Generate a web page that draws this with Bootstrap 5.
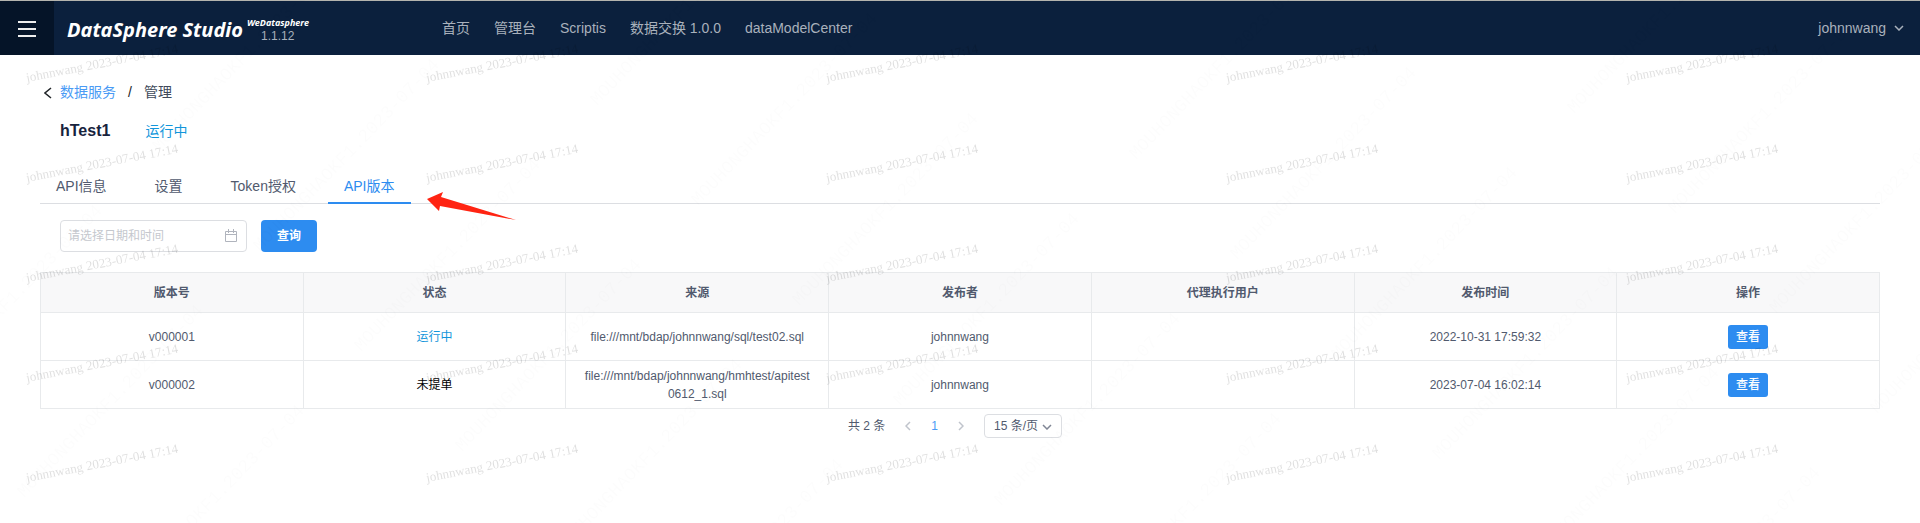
<!DOCTYPE html>
<html lang="zh-CN">
<head>
<meta charset="utf-8">
<meta name="viewport" content="width=device-width, initial-scale=1">
<title>DataSphere Studio</title>
<link href="https://cdn.jsdelivr.net/npm/bootstrap@5.3.0/dist/css/bootstrap.min.css" rel="stylesheet">
<style>
  body { font-family: "Liberation Sans", "Noto Sans CJK SC", sans-serif; font-size: 14px; line-height: 21px; color: #515a6e; min-height: 100vh; }
  a { text-decoration: none; }
  .topbar { height: 55px; background: #0b203d; border-top: 1px solid #b4b4ae; color: #a9b1bc; }
  .menu-btn { width: 54px; background: #051428; border: 0; color: #eee; }
  .brand { width: 388px; padding-left: 13px; gap: 4px; color: #fff; }
  .brand-name { font: italic bold 20px/24px "Noto Sans", sans-serif; padding-top: 4px; }
  .brand-sup { font: italic bold 9px/12px "Noto Sans", sans-serif; padding-top: 4px; }
  .brand-ver { font-size: 12px; line-height: 14px; color: #a9b1bc; padding-left: 14px; }
  .topbar .nav-link { color: inherit; padding: 0; }
  .user-btn { color: inherit; background: none; border: 0; padding: 0 16px; }
  .page { padding: 27px 40px 0; }
  .link-blue { color: #4a9bf5; }
  .crumb-now { color: #40495a; }
  .api-head { padding-left: 20px; column-gap: 35px; }
  .api-name { font-size: 16px; line-height: 24px; font-weight: 700; color: #17233d; }
  .run { color: #1296db; }
  .api-tabs { border-bottom: 1px solid #dcdee2; margin-top: 25px; }
  .api-tabs .nav-link { color: #515a6e; padding: 8px 16px 6px; line-height: 20px; margin: 0 16px -1px 0; border-bottom: 2px solid transparent; }
  .api-tabs .nav-link.active { color: #2d8cf0; border-color: #2d8cf0; }
  .arrow { left: 100%; bottom: -18px; }
  .filters { column-gap: 14px; }
  .date-box { width: 187px; height: 32px; border: 1px solid #dcdee2; border-radius: 4px; padding: 0 8px 0 7px; }
  .date-box input { border: 0; outline: 0; background: none; font-size: 12px; min-width: 0; padding: 0; }
  .date-box input::placeholder { color: #c5c8ce; }
  .btn-blue { background: #2d8cf0; color: #fff; border: 0; font-size: 12px; }
  .btn-query { width: 56px; height: 32px; border-radius: 4px; font-weight: 700; }
  .btn-view { width: 40px; height: 24px; border-radius: 3px; padding: 0; font-weight: 500; }
  .versions { table-layout: fixed; font-size: 12px; line-height: 18px; color: #515a6e; border: 1px solid #dcdee2; margin: 20px 0 0; }
  .versions th, .versions td { text-align: center; vertical-align: middle; border: 1px solid #e8eaec; height: 48px; padding: 0 16px; color: inherit; background: none; overflow-wrap: anywhere; }
  .versions th { height: 40px; background: #f8f8f9; }
  .pager { font-size: 12px; line-height: 24px; padding: 5px 10px 0 0; column-gap: 20px; }
  .pager button { background: none; border: 0; padding: 0; line-height: 0; color: #c0c4cc; }
  .size-box { width: 78px; height: 24px; border: 1px solid #dcdee2; border-radius: 4px; }
  .size-box select { display: block; appearance: none; border: 0; background: none; width: 100%; height: 22px; padding: 0 9px; font-size: 12px; line-height: 20px; color: #515a6e; }
  .size-box svg { right: 9px; top: 9px; pointer-events: none; }
  .watermark { inset: 0; width: 100%; height: 100%; pointer-events: none; z-index: 10; }
  .wm-a { font: 13px "Liberation Serif", serif; fill: #000; fill-opacity: .13; }
  .wm-b { font: 18px "Liberation Mono", monospace; fill: #000; fill-opacity: .012; }
</style>
</head>
<body>
<header class="topbar d-flex align-items-stretch">
  <button class="menu-btn" type="button" aria-label="菜单"><svg width="18" height="18" viewBox="0 0 18 18" stroke="currentColor" stroke-width="2"><path d="M0 2h18M0 9h18M0 16h18"/></svg></button>
  <div class="brand d-flex align-items-center">
    <div class="brand-name">DataSphere Studio</div>
    <div><div class="brand-sup">WeDatasphere</div><div class="brand-ver">1.1.12</div></div>
  </div>
  <nav class="nav align-items-center gap-4 flex-grow-1">
    <a class="nav-link" href="#">首页</a><a class="nav-link" href="#">管理台</a><a class="nav-link" href="#">Scriptis</a><a class="nav-link" href="#">数据交换 1.0.0</a><a class="nav-link" href="#">dataModelCenter</a>
  </nav>
  <button class="user-btn d-flex align-items-center gap-2" type="button">johnnwang <svg width="10" height="6" viewBox="0 0 10 6" fill="none" stroke="currentColor" stroke-width="1.5"><path d="M1 1l4 4 4-4"/></svg></button>
</header>
<main class="page">
  <nav class="d-flex align-items-center" aria-label="路径">
    <a class="d-flex text-dark ps-1 pe-2" href="#" aria-label="返回"><svg width="8" height="12" viewBox="0 0 8 12" fill="none" stroke="currentColor" stroke-width="1.5"><path d="M7 1L1 6l6 5"/></svg></a>
    <a class="link-blue" href="#">数据服务</a><span class="px-2 mx-1 text-dark">/</span><span class="crumb-now">管理</span>
  </nav>
  <div class="api-head d-flex align-items-center mt-3">
    <span class="api-name">hTest1</span><span class="run">运行中</span>
  </div>
  <div class="nav api-tabs">
    <a class="nav-link" href="#">API信息</a><a class="nav-link" href="#">设置</a><a class="nav-link" href="#">Token授权</a>
    <a class="nav-link active position-relative" href="#">API版本<svg class="arrow position-absolute ms-3" width="90" height="28" viewBox="0 0 90 28"><path fill="#ff2412" d="M0 7L16 0L14 5L89 28L13 14L12 19Z"/></svg></a>
  </div>
  <form class="filters d-flex mt-3 ms-3 ps-1">
    <label class="date-box d-flex align-items-center"><input class="flex-grow-1" type="text" aria-label="日期和时间" placeholder="请选择日期和时间"><svg width="14" height="14" viewBox="0 0 14 14" fill="none" stroke="#b0b4bd"><path d="M1.5 2.500h11v10h-11zM1.500 5.500h11M4.500 0v4M9.500 0v4"/></svg></label>
    <button class="btn-blue btn-query" type="button">查询</button>
  </form>
  <table class="table versions">
    <thead><tr><th>版本号</th><th>状态</th><th>来源</th><th>发布者</th><th>代理执行用户</th><th>发布时间</th><th>操作</th></tr></thead>
    <tbody>
      <tr><td>v000001</td><td><span class="run">运行中</span></td><td>file:///mnt/bdap/johnnwang/sql/test02.sql</td><td>johnnwang</td><td></td><td>2022-10-31 17:59:32</td><td><button class="btn-blue btn-view" type="button">查看</button></td></tr>
      <tr><td>v000002</td><td><span class="text-black">未提单</span></td><td>file:///mnt/bdap/johnnwang/hmhtest/apitest0612_1.sql</td><td>johnnwang</td><td></td><td>2023-07-04 16:02:14</td><td><button class="btn-blue btn-view" type="button">查看</button></td></tr>
    </tbody>
  </table>
  <div class="pager d-flex justify-content-center align-items-center">
    <span>共 2 条</span>
    <button type="button" aria-label="上一页"><svg width="6" height="10" viewBox="0 0 6 10" fill="none" stroke="currentColor" stroke-width="1.5"><path d="M5 1L1 5l4 4"/></svg></button>
    <a class="link-blue" href="#">1</a>
    <button type="button" aria-label="下一页"><svg width="6" height="10" viewBox="0 0 6 10" fill="none" stroke="currentColor" stroke-width="1.5"><path d="M1 1l4 4-4 4"/></svg></button>
    <div class="size-box position-relative"><select aria-label="每页条数"><option>15 条/页</option></select><svg class="position-absolute" width="10" height="6" viewBox="0 0 10 6" fill="none" stroke="#808695" stroke-width="1.5"><path d="M1 1l4 4 4-4"/></svg></div>
  </div>
</main>
<svg class="watermark position-fixed" id="watermark" aria-hidden="true"></svg>
<script src="https://cdn.jsdelivr.net/npm/bootstrap@5.3.0/dist/js/bootstrap.bundle.min.js"></script>
<script>
  // Two repeating stamps: the account's name and time, and a fainter diagonal one.
  const layer = document.getElementById('watermark');
  const stamp = (cls, text, x, y, angle) => {
    const t = document.createElementNS('http://www.w3.org/2000/svg', 'text');
    t.setAttribute('class', cls);
    t.setAttribute('transform', `translate(${x} ${y}) rotate(${angle})`);
    t.textContent = text;
    layer.append(t);
  };
  for (let y = 82; y < innerHeight; y += 100)
    for (let x = 27; x < innerWidth; x += 400) stamp('wm-a', 'johnnwang 2023-07-04 17:14', x, y, -11);
  for (let i = -4; i < 8; i++)
    for (let j = -8; j < 12; j++) {
      const x = 361 + 438 * i + 101 * j, y = 352 - 46 * i + 100 * j;
      if (x > -150 && x < innerWidth - 20 && y > 60 && y < innerHeight + 150) stamp('wm-b', 'MOUHONGHAOKF1.2023-07-04', x, y, -46);
    }
</script>
</body>
</html>
